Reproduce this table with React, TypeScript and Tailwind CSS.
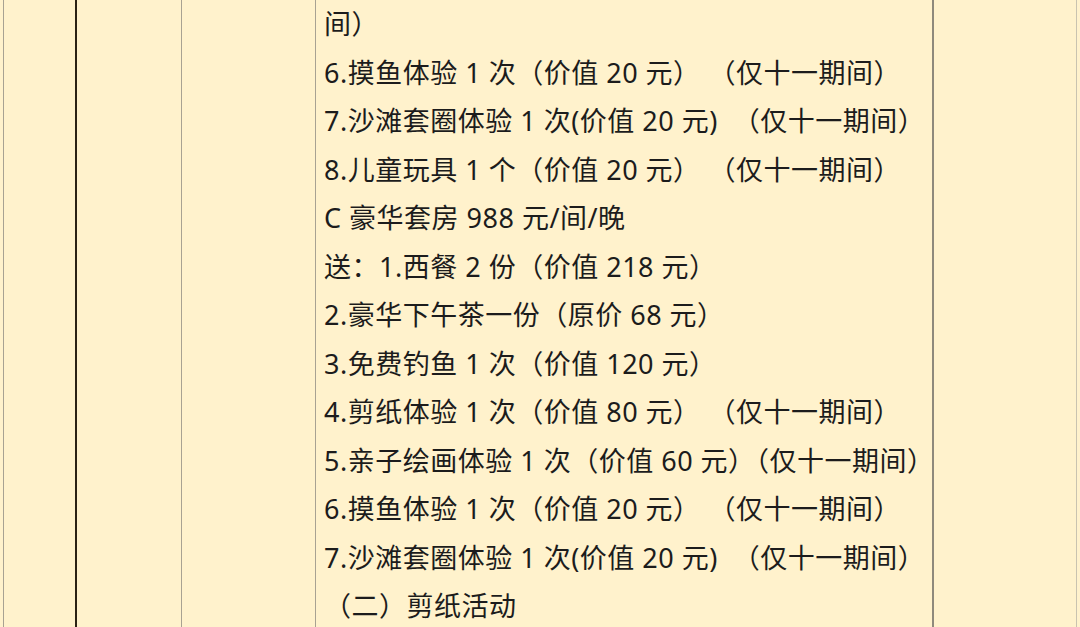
import React from "react";

const G = "|";

const lines = [
  "间）",
  "6.摸鱼体验 1 次（价值 20 元）|（仅十一期间）",
  "7.沙滩套圈体验 1 次(价值 20 元)  （仅十一期间）",
  "8.儿童玩具 1 个（价值 20 元）|（仅十一期间）",
  "C 豪华套房 988 元/间/晚",
  "送：1.西餐 2 份（价值 218 元）",
  "2.豪华下午茶一份（原价 68 元）",
  "3.免费钓鱼 1 次（价值 120 元）",
  "4.剪纸体验 1 次（价值 80 元）|（仅十一期间）",
  "5.亲子绘画体验 1 次（价值 60 元）（仅十一期间）",
  "6.摸鱼体验 1 次（价值 20 元）|（仅十一期间）",
  "7.沙滩套圈体验 1 次(价值 20 元)  （仅十一期间）",
  "（二）剪纸活动",
];

function Line({ text }: { text: string }) {
  const parts = text.split(G);
  if (parts.length === 1) return <div>{text}</div>;
  return (
    <div>
      {parts[0]}
      <span className="inline-block w-[8px]" />
      {parts[1]}
    </div>
  );
}

export default function App() {
  return (
    <div className="w-[1080px] h-[627px] overflow-hidden bg-[#fff2cc] flex">
      <div className="w-[3px] shrink-0" />
      <div className="w-[72px] shrink-0 border-l border-[#a8a292]" />
      <div className="w-[106px] shrink-0 border-l-2 border-[#2b2214]" />
      <div className="w-[134px] shrink-0 border-l border-[#a8a292]" />
      <div
        className="w-[617px] shrink-0 border-l border-[#a8a292] pl-[8px] text-[27px] tracking-[0.5px] leading-[48.5px] text-[#1c1c1c] whitespace-pre"
        style={{ fontFamily: '"Noto Sans", "Noto Sans CJK SC", sans-serif' }}
      >
        {lines.map((l, i) => (
          <Line key={i} text={l} />
        ))}
      </div>
      <div className="w-[144px] shrink-0 border-l-2 border-[#8f8a7c]" />
      <div className="w-[4px] shrink-0 border-l border-[#c9c3b0]" />
    </div>
  );
}
